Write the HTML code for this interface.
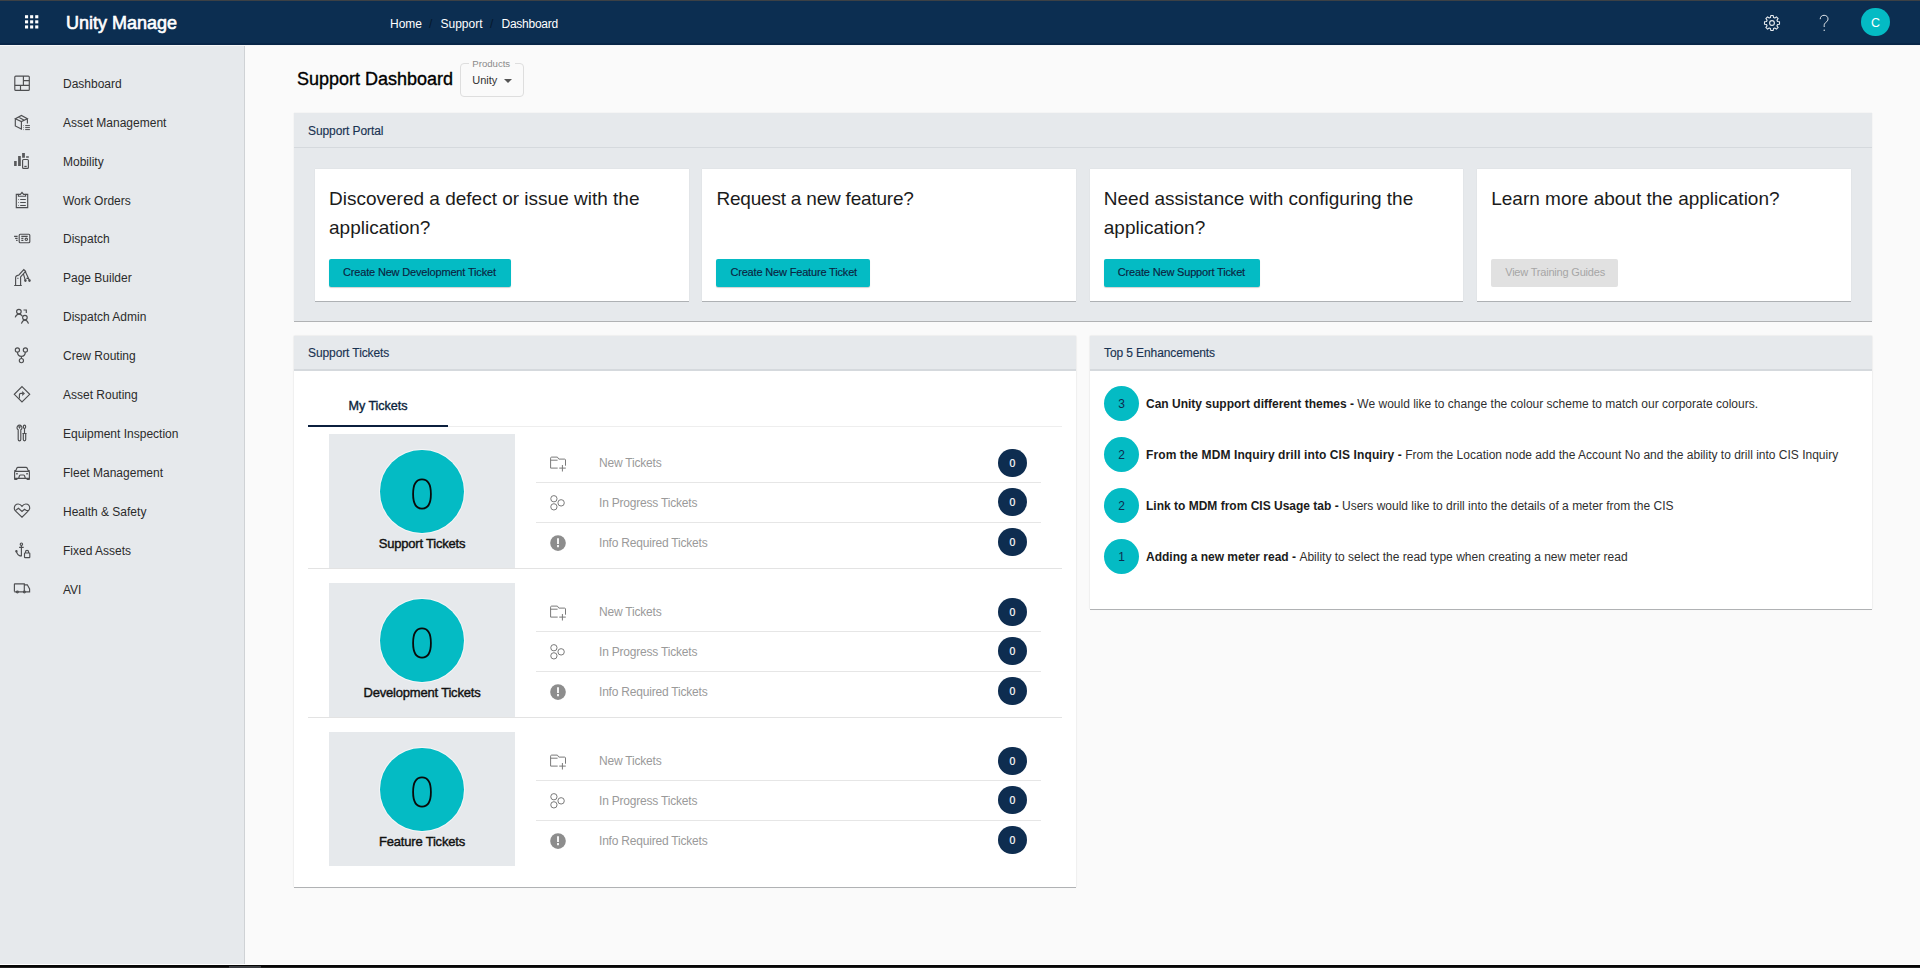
<!DOCTYPE html>
<html><head><meta charset="utf-8"><title>Support Dashboard</title>
<style>
*{margin:0;padding:0;box-sizing:border-box}
html,body{width:1920px;height:968px;overflow:hidden;background:#fafafa;font-family:"Liberation Sans",sans-serif;color:#323130}
.a{position:absolute}
.t{position:absolute;white-space:nowrap;line-height:1}
svg{position:absolute;overflow:visible}
.ic{fill:none;stroke:#4d4e50;stroke-width:1.15}
.nav{font-size:12px;color:#2b2b2b}
</style></head><body>
<!-- top line & header -->
<div class="a" style="left:0;top:0;width:1920px;height:1px;background:#3d4145"></div>
<div class="a" style="left:0;top:1px;width:1920px;height:44px;background:#0c2e51"></div>
<div class="a" style="left:0;top:43px;width:1920px;height:2px;background:#082648"></div>
<div class="a" style="left:0;top:45px;width:1920px;height:1px;background:#f6f7f8"></div>
<!-- grid icon -->
<svg style="left:0;top:0" width="60" height="44" viewBox="0 0 60 44"><g fill="#fff"><rect x="25.0" y="15.2" width="3.1" height="3.1"/><rect x="30.1" y="15.2" width="3.1" height="3.1"/><rect x="35.2" y="15.2" width="3.1" height="3.1"/><rect x="25.0" y="20.3" width="3.1" height="3.1"/><rect x="30.1" y="20.3" width="3.1" height="3.1"/><rect x="35.2" y="20.3" width="3.1" height="3.1"/><rect x="25.0" y="25.4" width="3.1" height="3.1"/><rect x="30.1" y="25.4" width="3.1" height="3.1"/><rect x="35.2" y="25.4" width="3.1" height="3.1"/></g></svg>
<div class="t" style="left:66px;top:14px;font-size:18px;color:#fff;-webkit-text-stroke:0.6px #fff">Unity Manage</div>
<div class="t" style="left:390px;top:18px;font-size:12px;color:#fff">Home</div>
<div class="t" style="left:429px;top:18px;font-size:12px;color:#06182b">/</div>
<div class="t" style="left:440.5px;top:18px;font-size:12px;color:#fff">Support</div>
<div class="t" style="left:490px;top:18px;font-size:12px;color:#06182b">/</div>
<div class="t" style="left:501.5px;top:18px;font-size:12px;color:#fff;letter-spacing:-0.25px">Dashboard</div>
<!-- gear -->
<svg style="left:1762px;top:13px" width="20" height="20" viewBox="0 0 20 20"><path fill="none" stroke="#e8ecf0" stroke-width="1.1" stroke-linejoin="round" d="M15.49 8.48 L17.50 8.79 L17.50 11.21 L15.49 11.52 L14.96 12.81 L16.16 14.45 L14.45 16.16 L12.81 14.96 L11.52 15.49 L11.21 17.50 L8.79 17.50 L8.48 15.49 L7.19 14.96 L5.55 16.16 L3.84 14.45 L5.04 12.81 L4.51 11.52 L2.50 11.21 L2.50 8.79 L4.51 8.48 L5.04 7.19 L3.84 5.55 L5.55 3.84 L7.19 5.04 L8.48 4.51 L8.79 2.50 L11.21 2.50 L11.52 4.51 L12.81 5.04 L14.45 3.84 L16.16 5.55 L14.96 7.19Z"/><circle cx="10" cy="10" r="2.4" fill="none" stroke="#e8ecf0" stroke-width="1.1"/></svg>
<!-- help -->
<svg style="left:1816px;top:13px" width="16" height="20" viewBox="0 0 16 20"><path fill="none" stroke="#e8ecf0" stroke-width="1" d="M4.2 6.2C4.2 3.6 6 2.3 8.1 2.3c2.3 0 3.9 1.5 3.9 3.6 0 1.6-.9 2.5-2 3.4-1 .8-1.8 1.6-1.8 3.1v1.6"/><circle cx="8.2" cy="17.3" r=".7" fill="#e8ecf0"/></svg>
<!-- avatar -->
<div class="a" style="left:1861px;top:7.8px;width:28.6px;height:28.6px;border-radius:50%;background:#04bbc4"></div>
<div class="t" style="left:1871px;top:16.6px;font-size:12.5px;color:#fff">C</div>

<!-- sidebar -->
<div class="a" style="left:0;top:46px;width:244px;height:918px;background:#e6e9ec"></div>
<div class="a" style="left:244px;top:46px;width:1px;height:918px;background:#cfd2d5"></div>
<!-- bottom bar -->
<div class="a" style="left:0;top:964px;width:1920px;height:1px;background:#fff"></div>
<div class="a" style="left:0;top:965px;width:1920px;height:2px;background:#060606"></div><div class="a" style="left:0;top:967px;width:1920px;height:1px;background:#202020"></div><div class="a" style="left:229px;top:966px;width:32px;height:2px;background:#3a3c40"></div>

<!--SIDEBAR-->
<div class="t nav" style="left:63px;top:77.7px">Dashboard</div>
<svg class="ic" style="left:10px;top:71px" width="24" height="24" viewBox="0 0 24 24"><rect x="4.8" y="5.1" width="14.5" height="14.3" rx="1"/><path d="M13.4 5.1V14.4M4.8 14.4H19.3M13.4 9.6H19.3M10.5 14.4V19.4"/></svg>
<div class="t nav" style="left:63px;top:116.7px">Asset Management</div>
<svg class="ic" style="left:10px;top:112px" width="24" height="24" viewBox="0 0 24 24"><path d="M5.3 6.8L11.4 3.4L17.4 6.8L11.4 9.6ZM5.3 6.8V13.9L11.4 17V9.6M17.4 6.8V11.4M8.3 5.1L14.3 8.3"/><path d="M15.2 13.6H19.9M15.2 15.6H19.9M15.2 17.6H19.9" stroke-width="1"/><path d="M13.2 13.6h.5M13.2 15.6h.5M13.2 17.6h.5" stroke-width="1"/></svg>
<div class="t nav" style="left:63px;top:155.6px">Mobility</div>
<svg class="ic" style="left:10px;top:150px" width="24" height="24" viewBox="0 0 24 24"><path fill="#58595b" stroke="none" d="M4.1 11h2.6v4.9H4.1zM8.1 6.1h2.7v9.8H8.1zM12.1 3h2.8v4.7h-2.8zM16.1 6.2h2.7v1.5h-2.7z"/><rect x="12.6" y="9.5" width="5.8" height="8.9" rx="1"/><path d="M14.3 16.4H16.7"/></svg>
<div class="t nav" style="left:63px;top:194.5px">Work Orders</div>
<svg class="ic" style="left:10px;top:189px" width="24" height="24" viewBox="0 0 24 24"><path d="M8.4 5.4H6.3V18.6H17.7V5.4H15.6"/><path d="M8.4 5.4V7.2H15.6V5.4H13.6L12 3.4L10.4 5.4Z"/><path d="M10.2 10.5H15.8M10.2 13.5H15.8M10.2 16.5H15.8M8.2 10.5h.6M8.2 13.5h.6M8.2 16.5h.6"/></svg>
<div class="t nav" style="left:63px;top:233.4px">Dispatch</div>
<svg class="ic" style="left:10px;top:228px" width="24" height="24" viewBox="0 0 24 24"><rect x="9.2" y="6.2" width="10.6" height="8.5" rx="1"/><path d="M11.3 8.4H17.7M11.3 10.4H13.4M11.3 12.4H13.4M4.1 8.4H7.6M5.1 10.4H7.6M6.1 12.4H7.6"/><circle cx="16.3" cy="11.3" r="1.2"/></svg>
<div class="t nav" style="left:63px;top:272.3px">Page Builder</div>
<svg class="ic" style="left:10px;top:266px" width="24" height="24" viewBox="0 0 24 24"><path d="M5.6 19.3V11.6C5.6 10.7 6.1 10 7 9.6L8.9 9L13.8 3.6L15.6 5.3L10.6 10.9V19.3M4.2 19.5H11.8M7.4 12.4H8.4M14.8 4.5L19.5 14.6M13.4 7.8L15.4 14.6M16.4 12.3H18.4"/><circle cx="15.4" cy="14.6" r=".7" fill="#4d4e50"/><circle cx="19.5" cy="14.6" r=".7" fill="#4d4e50"/></svg>
<div class="t nav" style="left:63px;top:311.3px">Dispatch Admin</div>
<svg class="ic" style="left:10px;top:305px" width="24" height="24" viewBox="0 0 24 24"><circle cx="8.9" cy="6.6" r="2.3"/><path d="M5.2 12.4C5.9 10.4 7.2 9.1 8.9 9.1C10.4 9.1 11.6 10 12.4 11.3"/><circle cx="14.9" cy="12.6" r="2.3"/><path d="M11.4 18.6C12.1 16.6 13.3 15.1 14.9 15.1C16.5 15.1 17.8 16.6 18.5 18.6M13.5 5H16.3V7.9"/></svg>
<div class="t nav" style="left:63px;top:350.2px">Crew Routing</div>
<svg class="ic" style="left:10px;top:344px" width="24" height="24" viewBox="0 0 24 24"><circle cx="7.4" cy="6" r="2.1"/><circle cx="15.4" cy="6" r="2.1"/><circle cx="11.4" cy="16.6" r="2.1"/><path d="M7.4 8.1C7.6 10.8 9.2 12.2 11.4 12.4C13.6 12.2 15.2 10.8 15.4 8.1M11.4 12.4V14.5"/></svg>
<div class="t nav" style="left:63px;top:389.1px">Asset Routing</div>
<svg class="ic" style="left:10px;top:383px" width="24" height="24" viewBox="0 0 24 24"><path d="M12 3.6L19.7 11.3L12 19L4.3 11.3Z"/><path d="M9.4 15.6V11.8C9.4 10.8 10 10.3 11 10.3H13.6"/><path fill="#58595b" stroke="none" d="M12.2 7.9L15 10.4L12.2 13z"/></svg>
<div class="t nav" style="left:63px;top:428.0px">Equipment Inspection</div>
<svg class="ic" style="left:10px;top:421px" width="24" height="24" viewBox="0 0 24 24"><path d="M8.2 8.8V18.5A1.3 1.3 0 0 0 10.8 18.5V8.8A2.5 2.5 0 1 0 8.2 8.8Z"/><path d="M8.6 5.2L9.5 6.8L10.4 5.2"/><rect x="13.4" y="4.1" width="2.2" height="3.2" rx="1.1"/><path d="M14.5 7.3V12.3M12.4 12.5H16.6M13.3 12.5V18.6A1.2 1.2 0 0 0 15.7 18.6V12.5"/></svg>
<div class="t nav" style="left:63px;top:466.9px">Fleet Management</div>
<svg class="ic" style="left:10px;top:460px" width="24" height="24" viewBox="0 0 24 24"><path d="M5.8 10.6L6.9 8C7.1 7.5 7.5 7.3 8 7.3H16C16.5 7.3 16.9 7.5 17.1 8L18.2 10.6M4.6 11.3H19.4M4.6 11.3V18.3H19.4V11.3M4.3 10.5H5.8M18.2 10.5H19.7M8.6 18.2L9.6 15.6C9.8 15.2 10.1 15 10.5 15H13.5C13.9 15 14.2 15.2 14.4 15.6L15.4 18.2M4.8 18.5V19.4H6.8V18.5M17.2 18.5V19.4H19.2V18.5"/><path d="M6.2 13.1H7.7V14.6H6.2zM16.3 13.1H17.8V14.6H16.3z" fill="#4d4e50" stroke="none"/></svg>
<div class="t nav" style="left:63px;top:505.9px">Health &amp; Safety</div>
<svg class="ic" style="left:10px;top:499px" width="24" height="24" viewBox="0 0 24 24"><path d="M12 7.3C10.9 5.7 9.7 5 8.2 5C5.9 5 4.3 6.9 4.3 9.2C4.3 10.3 4.7 11.2 5.4 11.9L12 18.1L17.6 12.6C18.9 11.6 19.7 10.5 19.7 9.1C19.7 6.8 18.1 5 15.8 5C14.3 5 13.1 5.7 12 7.3Z"/><path d="M5.3 11.6L8.5 9.3L12 12.4L14.5 10.2L16.4 11.5H18.4"/></svg>
<div class="t nav" style="left:63px;top:544.8px">Fixed Assets</div>
<svg class="ic" style="left:10px;top:538px" width="24" height="24" viewBox="0 0 24 24"><circle cx="11.4" cy="6.2" r="1.2"/><path d="M11.4 7.4V18.2M9.1 9.4H13.7M6.4 13.2C6.8 16.1 8.8 17.9 11.4 18.1"/><circle cx="6.4" cy="13.2" r=".6" fill="#58595b"/><rect x="14.5" y="15" width="5.3" height="4.6" rx=".6"/><path d="M15.5 15V13.9A1.55 1.55 0 0 1 18.6 13.9V15"/></svg>
<div class="t nav" style="left:63px;top:583.7px">AVI</div>
<svg class="ic" style="left:10px;top:577px" width="24" height="24" viewBox="0 0 24 24"><path d="M4.4 14.6V7.3C4.4 7 4.6 6.8 4.9 6.8H14.3V14.6M14.3 7.8H17.3L19.6 12V14.8H4.4"/><circle cx="7.4" cy="14.9" r=".9"/><circle cx="14.4" cy="14.9" r=".9"/></svg>
<!--/SIDEBAR-->

<!-- page title -->
<div class="t" style="left:297px;top:69.8px;font-size:18px;color:#000;-webkit-text-stroke:0.35px #000">Support Dashboard</div>
<div class="a" style="left:460px;top:62.6px;width:64.4px;height:34px;border:1px solid #dedede;border-radius:4px"></div>
<div class="a" style="left:469px;top:58px;width:46px;height:8px;background:#fafafa"></div>
<div class="t" style="left:472.3px;top:58.7px;font-size:9.6px;color:#8a8a8a">Products</div>
<div class="t" style="left:472.3px;top:75.0px;font-size:11px;color:#333">Unity</div>
<svg style="left:503px;top:77.5px" width="10" height="6" viewBox="0 0 10 6"><path d="M1 1h8L5 5z" fill="#555"/></svg>

<!--PANELS-->
<div class="a" style="left:293.5px;top:113px;width:1578.5px;height:208.3px;background:#e6e9ec;box-shadow:0 1.4px 0.4px #b0b2b4,0 0 1px rgba(0,0,0,.12)"></div>
<div class="a" style="left:293.5px;top:146.5px;width:1578.5px;height:1.6px;background:#d5d9dd"></div>
<div class="t" style="left:308px;top:125.1px;font-size:12px;color:#1a3352;-webkit-text-stroke:0.15px #1a3352;letter-spacing:-0.1px">Support Portal</div>
<div class="a" style="left:315.0px;top:169px;width:373.6px;height:131.5px;background:#fff;box-shadow:0 1.4px 0.4px #aeb1b4,0 0 1px rgba(0,0,0,.10)"></div>
<div class="t" style="left:329.0px;top:188.7px;font-size:19px;color:#1b1b1b;letter-spacing:0">Discovered a defect or issue with the</div>
<div class="t" style="left:329.0px;top:217.7px;font-size:19px;color:#1b1b1b;letter-spacing:0">application?</div>
<div class="a" style="left:329.0px;top:258.6px;width:182px;height:28.4px;background:#04bbc4;border-radius:2px;box-shadow:0 1px 1px rgba(0,0,0,.18)"></div>
<div class="t" style="left:343.0px;top:267.1px;font-size:11px;color:#0b2441;-webkit-text-stroke:0.15px #0b2441;letter-spacing:-0.17px">Create New Development Ticket</div>
<div class="a" style="left:702.4px;top:169px;width:373.6px;height:131.5px;background:#fff;box-shadow:0 1.4px 0.4px #aeb1b4,0 0 1px rgba(0,0,0,.10)"></div>
<div class="t" style="left:716.4px;top:188.7px;font-size:19px;color:#1b1b1b;letter-spacing:-0.2px">Request a new feature?</div>
<div class="a" style="left:716.4px;top:258.6px;width:153.7px;height:28.4px;background:#04bbc4;border-radius:2px;box-shadow:0 1px 1px rgba(0,0,0,.18)"></div>
<div class="t" style="left:730.4px;top:267.1px;font-size:11px;color:#0b2441;-webkit-text-stroke:0.15px #0b2441;letter-spacing:-0.17px">Create New Feature Ticket</div>
<div class="a" style="left:1089.8px;top:169px;width:373.6px;height:131.5px;background:#fff;box-shadow:0 1.4px 0.4px #aeb1b4,0 0 1px rgba(0,0,0,.10)"></div>
<div class="t" style="left:1103.8px;top:188.7px;font-size:19px;color:#1b1b1b;letter-spacing:0">Need assistance with configuring the</div>
<div class="t" style="left:1103.8px;top:217.7px;font-size:19px;color:#1b1b1b;letter-spacing:0">application?</div>
<div class="a" style="left:1103.8px;top:258.6px;width:156px;height:28.4px;background:#04bbc4;border-radius:2px;box-shadow:0 1px 1px rgba(0,0,0,.18)"></div>
<div class="t" style="left:1117.8px;top:267.1px;font-size:11px;color:#0b2441;-webkit-text-stroke:0.15px #0b2441;letter-spacing:-0.17px">Create New Support Ticket</div>
<div class="a" style="left:1477.2px;top:169px;width:373.6px;height:131.5px;background:#fff;box-shadow:0 1.4px 0.4px #aeb1b4,0 0 1px rgba(0,0,0,.10)"></div>
<div class="t" style="left:1491.2px;top:188.7px;font-size:19px;color:#1b1b1b;letter-spacing:0">Learn more about the application?</div>
<div class="a" style="left:1491.2px;top:258.6px;width:127.3px;height:28.4px;background:#e1e1e1;border-radius:2px"></div>
<div class="t" style="left:1505.2px;top:267.1px;font-size:11px;color:#a6a6a6;letter-spacing:-0.2px">View Training Guides</div>
<div class="a" style="left:293.5px;top:336px;width:782.5px;height:551px;background:#fff;box-shadow:0 1.4px 0.4px #b0b2b4,0 0 1.5px rgba(0,0,0,.16)"></div>
<div class="a" style="left:293.5px;top:336px;width:782.5px;height:34px;background:#e6e9ec"></div>
<div class="a" style="left:293.5px;top:369px;width:782.5px;height:1.7px;background:#d5d9dd"></div>
<div class="t" style="left:308px;top:346.9px;font-size:12px;color:#1a3352;-webkit-text-stroke:0.15px #1a3352;letter-spacing:-0.1px">Support Tickets</div>
<div class="t" style="left:348.5px;top:399.9px;font-size:12.6px;color:#0a1f3c;-webkit-text-stroke:0.35px #0a1f3c;letter-spacing:-0.05px">My Tickets</div>
<div class="a" style="left:308px;top:425.5px;width:754px;height:1px;background:#eeeeee"></div>
<div class="a" style="left:308px;top:424.5px;width:140px;height:2.3px;background:#0b1f3d"></div>
<div class="a" style="left:329px;top:434px;width:186px;height:134.3px;background:#e6e9ec"></div>
<div class="a" style="left:308px;top:568px;width:754px;height:1px;background:#e3e3e3"></div>
<div class="a" style="left:380.2px;top:449.7px;width:83.6px;height:83.6px;border-radius:50%;background:#04bbc4;box-shadow:0 0 0 1px rgba(255,255,255,.6)"></div>
<svg style="left:402px;top:473.5px" width="40" height="40" viewBox="0 0 40 40"><path d="M11.1 20C11.1 9.5 15 5.4 20 5.4C25 5.4 28.9 9.5 28.9 20C28.9 30.5 25 34.6 20 34.6C15 34.6 11.1 30.5 11.1 20Z" fill="none" stroke="#0a0a0a" stroke-width="1.8"/></svg>
<div class="t" style="left:322px;width:200px;text-align:center;top:537.3px;font-size:13px;color:#111;-webkit-text-stroke:0.4px #111;letter-spacing:-0.2px">Support Tickets</div>
<div class="a" style="left:536px;top:482px;width:505px;height:1px;background:#e6e6e6"></div>
<div class="t" style="left:599px;top:456.8px;font-size:12px;color:#9a9a9a;letter-spacing:-0.2px">New Tickets</div>
<svg style="left:546px;top:452px;fill:none;stroke:#7a7a7a;stroke-width:1" width="24" height="24" viewBox="0 0 24 24"><path d="M4.6 16.1V6.1C4.6 5.5 5 5.1 5.6 5.1H11.4L12.8 7.1H18.6C19.2 7.1 19.5 7.5 19.5 8V13.7M4.6 8.2H11.6M4.6 16.1H11.7M13.2 16.1H19.8M16.4 13V19.5"/></svg>
<div class="a" style="left:998.2px;top:448.5px;width:28.4px;height:28.4px;border-radius:50%;background:#0e2d50"></div>
<div class="t" style="left:1002.4px;width:20px;text-align:center;top:457.7px;font-size:10.5px;color:#fff;-webkit-text-stroke:0.2px #fff">0</div>
<div class="a" style="left:536px;top:522px;width:505px;height:1px;background:#e6e6e6"></div>
<div class="t" style="left:599px;top:496.8px;font-size:12px;color:#9a9a9a;letter-spacing:-0.2px">In Progress Tickets</div>
<svg style="left:546px;top:491px;fill:none;stroke:#7a7a7a;stroke-width:1" width="24" height="24" viewBox="0 0 24 24"><circle cx="7.9" cy="7.75" r="3.15"/><circle cx="7.9" cy="15.85" r="3.15"/><circle cx="15.1" cy="11.85" r="3.2"/></svg>
<div class="a" style="left:998.2px;top:488.1px;width:28.4px;height:28.4px;border-radius:50%;background:#0e2d50"></div>
<div class="t" style="left:1002.4px;width:20px;text-align:center;top:497.3px;font-size:10.5px;color:#fff;-webkit-text-stroke:0.2px #fff">0</div>
<div class="t" style="left:599px;top:536.8px;font-size:12px;color:#9a9a9a;letter-spacing:-0.2px">Info Required Tickets</div>
<svg style="left:546px;top:530px;fill:none;stroke:#7a7a7a;stroke-width:1" width="24" height="24" viewBox="0 0 24 24"><circle cx="12" cy="13.1" r="7.8" fill="#8d8d8d" stroke="none"/><path d="M11.1 8.2h1.8v5.7h-1.8zM11.1 15h1.8v2.2h-1.8z" fill="#fff" stroke="none"/></svg>
<div class="a" style="left:998.2px;top:527.5px;width:28.4px;height:28.4px;border-radius:50%;background:#0e2d50"></div>
<div class="t" style="left:1002.4px;width:20px;text-align:center;top:536.7px;font-size:10.5px;color:#fff;-webkit-text-stroke:0.2px #fff">0</div>
<div class="a" style="left:329px;top:583px;width:186px;height:134.3px;background:#e6e9ec"></div>
<div class="a" style="left:308px;top:717px;width:754px;height:1px;background:#e3e3e3"></div>
<div class="a" style="left:380.2px;top:598.7px;width:83.6px;height:83.6px;border-radius:50%;background:#04bbc4;box-shadow:0 0 0 1px rgba(255,255,255,.6)"></div>
<svg style="left:402px;top:622.5px" width="40" height="40" viewBox="0 0 40 40"><path d="M11.1 20C11.1 9.5 15 5.4 20 5.4C25 5.4 28.9 9.5 28.9 20C28.9 30.5 25 34.6 20 34.6C15 34.6 11.1 30.5 11.1 20Z" fill="none" stroke="#0a0a0a" stroke-width="1.8"/></svg>
<div class="t" style="left:322px;width:200px;text-align:center;top:686.3px;font-size:13px;color:#111;-webkit-text-stroke:0.4px #111;letter-spacing:-0.2px">Development Tickets</div>
<div class="a" style="left:536px;top:631px;width:505px;height:1px;background:#e6e6e6"></div>
<div class="t" style="left:599px;top:605.8px;font-size:12px;color:#9a9a9a;letter-spacing:-0.2px">New Tickets</div>
<svg style="left:546px;top:601px;fill:none;stroke:#7a7a7a;stroke-width:1" width="24" height="24" viewBox="0 0 24 24"><path d="M4.6 16.1V6.1C4.6 5.5 5 5.1 5.6 5.1H11.4L12.8 7.1H18.6C19.2 7.1 19.5 7.5 19.5 8V13.7M4.6 8.2H11.6M4.6 16.1H11.7M13.2 16.1H19.8M16.4 13V19.5"/></svg>
<div class="a" style="left:998.2px;top:597.5px;width:28.4px;height:28.4px;border-radius:50%;background:#0e2d50"></div>
<div class="t" style="left:1002.4px;width:20px;text-align:center;top:606.7px;font-size:10.5px;color:#fff;-webkit-text-stroke:0.2px #fff">0</div>
<div class="a" style="left:536px;top:671px;width:505px;height:1px;background:#e6e6e6"></div>
<div class="t" style="left:599px;top:645.8px;font-size:12px;color:#9a9a9a;letter-spacing:-0.2px">In Progress Tickets</div>
<svg style="left:546px;top:640px;fill:none;stroke:#7a7a7a;stroke-width:1" width="24" height="24" viewBox="0 0 24 24"><circle cx="7.9" cy="7.75" r="3.15"/><circle cx="7.9" cy="15.85" r="3.15"/><circle cx="15.1" cy="11.85" r="3.2"/></svg>
<div class="a" style="left:998.2px;top:637.1px;width:28.4px;height:28.4px;border-radius:50%;background:#0e2d50"></div>
<div class="t" style="left:1002.4px;width:20px;text-align:center;top:646.3px;font-size:10.5px;color:#fff;-webkit-text-stroke:0.2px #fff">0</div>
<div class="t" style="left:599px;top:685.8px;font-size:12px;color:#9a9a9a;letter-spacing:-0.2px">Info Required Tickets</div>
<svg style="left:546px;top:679px;fill:none;stroke:#7a7a7a;stroke-width:1" width="24" height="24" viewBox="0 0 24 24"><circle cx="12" cy="13.1" r="7.8" fill="#8d8d8d" stroke="none"/><path d="M11.1 8.2h1.8v5.7h-1.8zM11.1 15h1.8v2.2h-1.8z" fill="#fff" stroke="none"/></svg>
<div class="a" style="left:998.2px;top:676.5px;width:28.4px;height:28.4px;border-radius:50%;background:#0e2d50"></div>
<div class="t" style="left:1002.4px;width:20px;text-align:center;top:685.7px;font-size:10.5px;color:#fff;-webkit-text-stroke:0.2px #fff">0</div>
<div class="a" style="left:329px;top:732px;width:186px;height:134.3px;background:#e6e9ec"></div>
<div class="a" style="left:380.2px;top:747.7px;width:83.6px;height:83.6px;border-radius:50%;background:#04bbc4;box-shadow:0 0 0 1px rgba(255,255,255,.6)"></div>
<svg style="left:402px;top:771.5px" width="40" height="40" viewBox="0 0 40 40"><path d="M11.1 20C11.1 9.5 15 5.4 20 5.4C25 5.4 28.9 9.5 28.9 20C28.9 30.5 25 34.6 20 34.6C15 34.6 11.1 30.5 11.1 20Z" fill="none" stroke="#0a0a0a" stroke-width="1.8"/></svg>
<div class="t" style="left:322px;width:200px;text-align:center;top:835.3px;font-size:13px;color:#111;-webkit-text-stroke:0.4px #111;letter-spacing:-0.2px">Feature Tickets</div>
<div class="a" style="left:536px;top:780px;width:505px;height:1px;background:#e6e6e6"></div>
<div class="t" style="left:599px;top:754.8px;font-size:12px;color:#9a9a9a;letter-spacing:-0.2px">New Tickets</div>
<svg style="left:546px;top:750px;fill:none;stroke:#7a7a7a;stroke-width:1" width="24" height="24" viewBox="0 0 24 24"><path d="M4.6 16.1V6.1C4.6 5.5 5 5.1 5.6 5.1H11.4L12.8 7.1H18.6C19.2 7.1 19.5 7.5 19.5 8V13.7M4.6 8.2H11.6M4.6 16.1H11.7M13.2 16.1H19.8M16.4 13V19.5"/></svg>
<div class="a" style="left:998.2px;top:746.5px;width:28.4px;height:28.4px;border-radius:50%;background:#0e2d50"></div>
<div class="t" style="left:1002.4px;width:20px;text-align:center;top:755.7px;font-size:10.5px;color:#fff;-webkit-text-stroke:0.2px #fff">0</div>
<div class="a" style="left:536px;top:820px;width:505px;height:1px;background:#e6e6e6"></div>
<div class="t" style="left:599px;top:794.8px;font-size:12px;color:#9a9a9a;letter-spacing:-0.2px">In Progress Tickets</div>
<svg style="left:546px;top:789px;fill:none;stroke:#7a7a7a;stroke-width:1" width="24" height="24" viewBox="0 0 24 24"><circle cx="7.9" cy="7.75" r="3.15"/><circle cx="7.9" cy="15.85" r="3.15"/><circle cx="15.1" cy="11.85" r="3.2"/></svg>
<div class="a" style="left:998.2px;top:786.1px;width:28.4px;height:28.4px;border-radius:50%;background:#0e2d50"></div>
<div class="t" style="left:1002.4px;width:20px;text-align:center;top:795.3px;font-size:10.5px;color:#fff;-webkit-text-stroke:0.2px #fff">0</div>
<div class="t" style="left:599px;top:834.8px;font-size:12px;color:#9a9a9a;letter-spacing:-0.2px">Info Required Tickets</div>
<svg style="left:546px;top:828px;fill:none;stroke:#7a7a7a;stroke-width:1" width="24" height="24" viewBox="0 0 24 24"><circle cx="12" cy="13.1" r="7.8" fill="#8d8d8d" stroke="none"/><path d="M11.1 8.2h1.8v5.7h-1.8zM11.1 15h1.8v2.2h-1.8z" fill="#fff" stroke="none"/></svg>
<div class="a" style="left:998.2px;top:825.5px;width:28.4px;height:28.4px;border-radius:50%;background:#0e2d50"></div>
<div class="t" style="left:1002.4px;width:20px;text-align:center;top:834.7px;font-size:10.5px;color:#fff;-webkit-text-stroke:0.2px #fff">0</div>
<div class="a" style="left:1090px;top:336px;width:782px;height:272.5px;background:#fff;box-shadow:0 1.4px 0.4px #b0b2b4,0 0 1.5px rgba(0,0,0,.16)"></div>
<div class="a" style="left:1090px;top:336px;width:782px;height:34px;background:#e6e9ec"></div>
<div class="a" style="left:1090px;top:369px;width:782px;height:1.7px;background:#d5d9dd"></div>
<div class="t" style="left:1104px;top:347.4px;font-size:12px;color:#1a3352;-webkit-text-stroke:0.15px #1a3352;letter-spacing:-0.1px">Top 5 Enhancements</div>
<div class="a" style="left:1103.9px;top:386.0px;width:35.2px;height:35.2px;border-radius:50%;background:#04bbc4"></div>
<div class="t" style="left:1111.5px;width:20px;text-align:center;top:397.7px;font-size:12px;color:#0d2d50">3</div>
<div class="t" style="left:1146px;top:397.7px;font-size:12px;color:#1b1b1b"><b style="letter-spacing:0">Can Unity support different themes - </b><span style="color:#2f2f2f">We would like to change the colour scheme to match our corporate colours.</span></div>
<div class="a" style="left:1103.9px;top:437.0px;width:35.2px;height:35.2px;border-radius:50%;background:#04bbc4"></div>
<div class="t" style="left:1111.5px;width:20px;text-align:center;top:448.7px;font-size:12px;color:#0d2d50">2</div>
<div class="t" style="left:1146px;top:448.7px;font-size:12px;color:#1b1b1b"><b style="letter-spacing:0.1px">From the MDM Inquiry drill into CIS Inquiry - </b><span style="color:#2f2f2f">From the Location node add the Account No and the ability to drill into CIS Inquiry</span></div>
<div class="a" style="left:1103.9px;top:488.0px;width:35.2px;height:35.2px;border-radius:50%;background:#04bbc4"></div>
<div class="t" style="left:1111.5px;width:20px;text-align:center;top:499.7px;font-size:12px;color:#0d2d50">2</div>
<div class="t" style="left:1146px;top:499.7px;font-size:12px;color:#1b1b1b"><b style="letter-spacing:0">Link to MDM from CIS Usage tab - </b><span style="color:#2f2f2f">Users would like to drill into the details of a meter from the CIS</span></div>
<div class="a" style="left:1103.9px;top:539.0px;width:35.2px;height:35.2px;border-radius:50%;background:#04bbc4"></div>
<div class="t" style="left:1111.5px;width:20px;text-align:center;top:550.7px;font-size:12px;color:#0d2d50">1</div>
<div class="t" style="left:1146px;top:550.7px;font-size:12px;color:#1b1b1b"><b style="letter-spacing:0">Adding a new meter read - </b><span style="color:#2f2f2f">Ability to select the read type when creating a new meter read</span></div>
<!--/PANELS-->
</body></html>
